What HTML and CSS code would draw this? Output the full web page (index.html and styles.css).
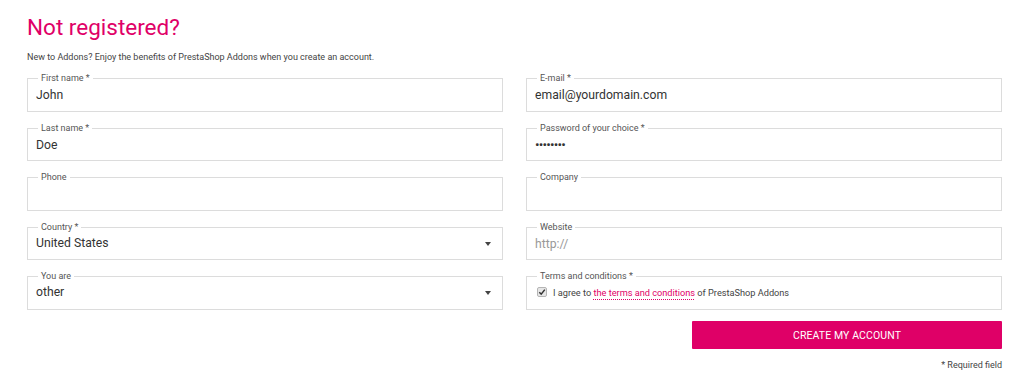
FILE: index.html
```html
<!DOCTYPE html>
<html lang="en">
<head>
    <meta charset="UTF-8">
    <meta name="viewport" content="width=device-width, initial-scale=1.0">
    <title>Create an account</title>
    <link rel="stylesheet" href="styles.css">
</head>
<body>
    <div class="container">
        <h1>Not registered?</h1>
        <p class="intro">New to Addons? Enjoy the benefits of PrestaShop Addons when you create an account.</p>

        <form class="signup">
            <div class="col">
                <fieldset class="field">
                    <legend>First name *</legend>
                    <input type="text" value="John">
                </fieldset>
                <fieldset class="field">
                    <legend>Last name *</legend>
                    <input type="text" value="Doe">
                </fieldset>
                <fieldset class="field">
                    <legend>Phone</legend>
                    <input type="text" value="">
                </fieldset>
                <fieldset class="field">
                    <legend>Country *</legend>
                    <div class="select">
                        <span>United States</span>
                        <span class="caret"></span>
                    </div>
                </fieldset>
                <fieldset class="field">
                    <legend>You are</legend>
                    <div class="select">
                        <span>other</span>
                        <span class="caret"></span>
                    </div>
                </fieldset>
            </div>

            <div class="col">
                <fieldset class="field">
                    <legend>E-mail *</legend>
                    <input type="text" value="email@yourdomain.com">
                </fieldset>
                <fieldset class="field">
                    <legend>Password of your choice *</legend>
                    <input type="password" class="pwd" value="password">
                </fieldset>
                <fieldset class="field">
                    <legend>Company</legend>
                    <input type="text" value="">
                </fieldset>
                <fieldset class="field">
                    <legend>Website</legend>
                    <input type="text" placeholder="http://">
                </fieldset>
                <fieldset class="field">
                    <legend>Terms and conditions *</legend>
                    <label class="terms">
                        <span class="check">
                            <svg width="10" height="10" viewBox="0 0 10 10">
                                <rect x="0.5" y="0.5" width="9" height="9" rx="1.5" fill="#e6e6e6" stroke="#b5b5b5"/>
                                <path d="M2.3 5.2 L4.2 7.2 L7.8 2.6" fill="none" stroke="#333" stroke-width="1.5"/>
                            </svg>
                        </span>
                        <span>I agree to <a href="#">the terms and conditions</a> of PrestaShop Addons</span>
                    </label>
                </fieldset>

                <button type="button" class="submit">CREATE MY ACCOUNT</button>
                <p class="required">* Required field</p>
            </div>
        </form>
    </div>
</body>
</html>
```

FILE: styles.css
```css
* {
    box-sizing: border-box;
    margin: 0;
    padding: 0;
}

body {
    font-family: 'Roboto', sans-serif;
    background-color: #ffffff;
    color: #333333;
}

.container {
    padding: 14px 22px 0 27px;
}

h1 {
    color: #df0067;
    font-size: 22.5px;
    font-weight: 400;
    line-height: 26px;
}

.intro {
    font-size: 9px;
    color: #444444;
    margin-top: 12px;
    line-height: 11px;
}

.signup {
    display: grid;
    grid-template-columns: 476px 1fr;
    column-gap: 23px;
    margin-top: 10px;
}

.col {
    display: flex;
    flex-direction: column;
}

.field {
    border: 1px solid #dcdcdc;
    padding: 0 7px 0 8px;
    height: 38.5px;
    margin-bottom: 11px;
}

.field legend {
    font-size: 9px;
    line-height: 11px;
    color: #555555;
    padding: 0 3px;
    margin-left: 2px;
}

.field input {
    border: none;
    outline: none;
    width: 100%;
    background: transparent;
    font-family: 'Roboto', sans-serif;
    font-size: 12.2px;
    color: #333333;
    height: 20px;
    padding: 0;
}

.field input::placeholder {
    color: #999999;
}

.field .pwd {
    font-size: 13.5px;
    letter-spacing: -0.8px;
}

.select {
    display: flex;
    justify-content: space-between;
    align-items: center;
    height: 20px;
    font-size: 12.2px;
    color: #333333;
    padding-right: 4px;
}

.caret {
    width: 0;
    height: 0;
    border-left: 3.5px solid transparent;
    border-right: 3.5px solid transparent;
    border-top: 4px solid #444444;
    margin-top: 2px;
}

.terms {
    display: flex;
    align-items: center;
    gap: 6px;
    font-size: 9.2px;
    color: #444444;
    height: 20px;
    padding-left: 2px;
}

.check {
    display: flex;
}

.terms a {
    color: #df0067;
    text-decoration: underline dotted #df0067;
    text-underline-offset: 3px;
}

.submit {
    align-self: flex-end;
    width: 310px;
    height: 28px;
    margin-top: 0.5px;
    background-color: #df0067;
    color: #ffffff;
    border: none;
    border-radius: 1px;
    font-family: 'Roboto', sans-serif;
    font-size: 10.5px;
    letter-spacing: 0.1px;
}

.required {
    text-align: right;
    font-size: 9px;
    color: #444444;
    margin-top: 11px;
}
```
